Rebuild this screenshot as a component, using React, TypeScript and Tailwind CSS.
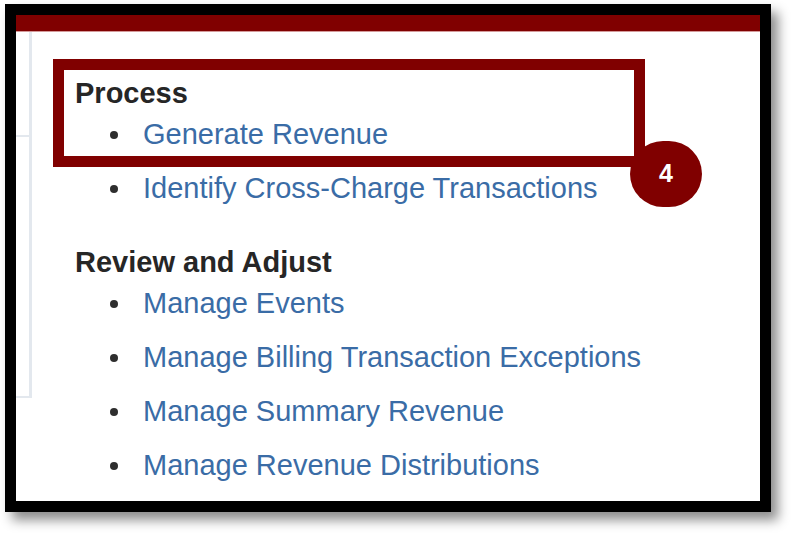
const sections = [
  { title: 'Process', items: ['Generate Revenue', 'Identify Cross-Charge Transactions'] },
  {
    title: 'Review and Adjust',
    items: [
      'Manage Events',
      'Manage Billing Transaction Exceptions',
      'Manage Summary Revenue',
      'Manage Revenue Distributions',
    ],
  },
];

export default function App() {
  return (
    <div className="w-[793px] h-[533px] bg-white pt-[4px] pl-[5px] font-['Liberation_Sans',Arial,sans-serif]">
      <div className="w-[766px] h-[508px] border-[11px] border-black bg-white shadow-[7px_8px_11px_rgba(0,0,0,0.45)] flex flex-col">
        {/* top bar */}
        <div className="h-[17px] bg-[#800000] border-b border-[#d49a9a] shrink-0" />

        <div className="flex flex-1">
          {/* collapsed side panel */}
          <div className="w-[16px] flex flex-col">
            <div className="h-[366px] border-r-[3px] border-b-2 border-[#e3e8ee] flex flex-col">
              <div className="h-[105px] border-b-2 border-[#e3e8ee]" />
            </div>
          </div>

          {/* task list */}
          <div className="relative flex-1 pl-[43px] pt-[47px]">
            {sections.map((s, i) => (
              <div key={s.title} className={i > 0 ? 'mt-[33px]' : ''}>
                <div className="text-[29px] leading-[28px] font-bold text-[#262626]">{s.title}</div>
                <ul>
                  {s.items.map((item) => (
                    <li key={item} className="flex items-center h-[54px] leading-[54px] pl-[35px]">
                      <span className="w-[8px] h-[8px] mt-[2px] rounded-full bg-[#2e2e2e] shrink-0" />
                      <span className="ml-[25px] text-[29px] text-[#3a6ca6] whitespace-nowrap">{item}</span>
                    </li>
                  ))}
                </ul>
              </div>
            ))}

            {/* callout highlight */}
            <div className="absolute left-[21px] top-[27px] w-[592px] h-[108px] border-[11px] border-[#800000]" />
            <div className="absolute left-[598px] top-[109px] w-[72px] h-[66px] rounded-full bg-[#800000] flex items-center justify-center text-white font-bold text-[25px]">
              4
            </div>
          </div>
        </div>
      </div>
    </div>
  );
}
